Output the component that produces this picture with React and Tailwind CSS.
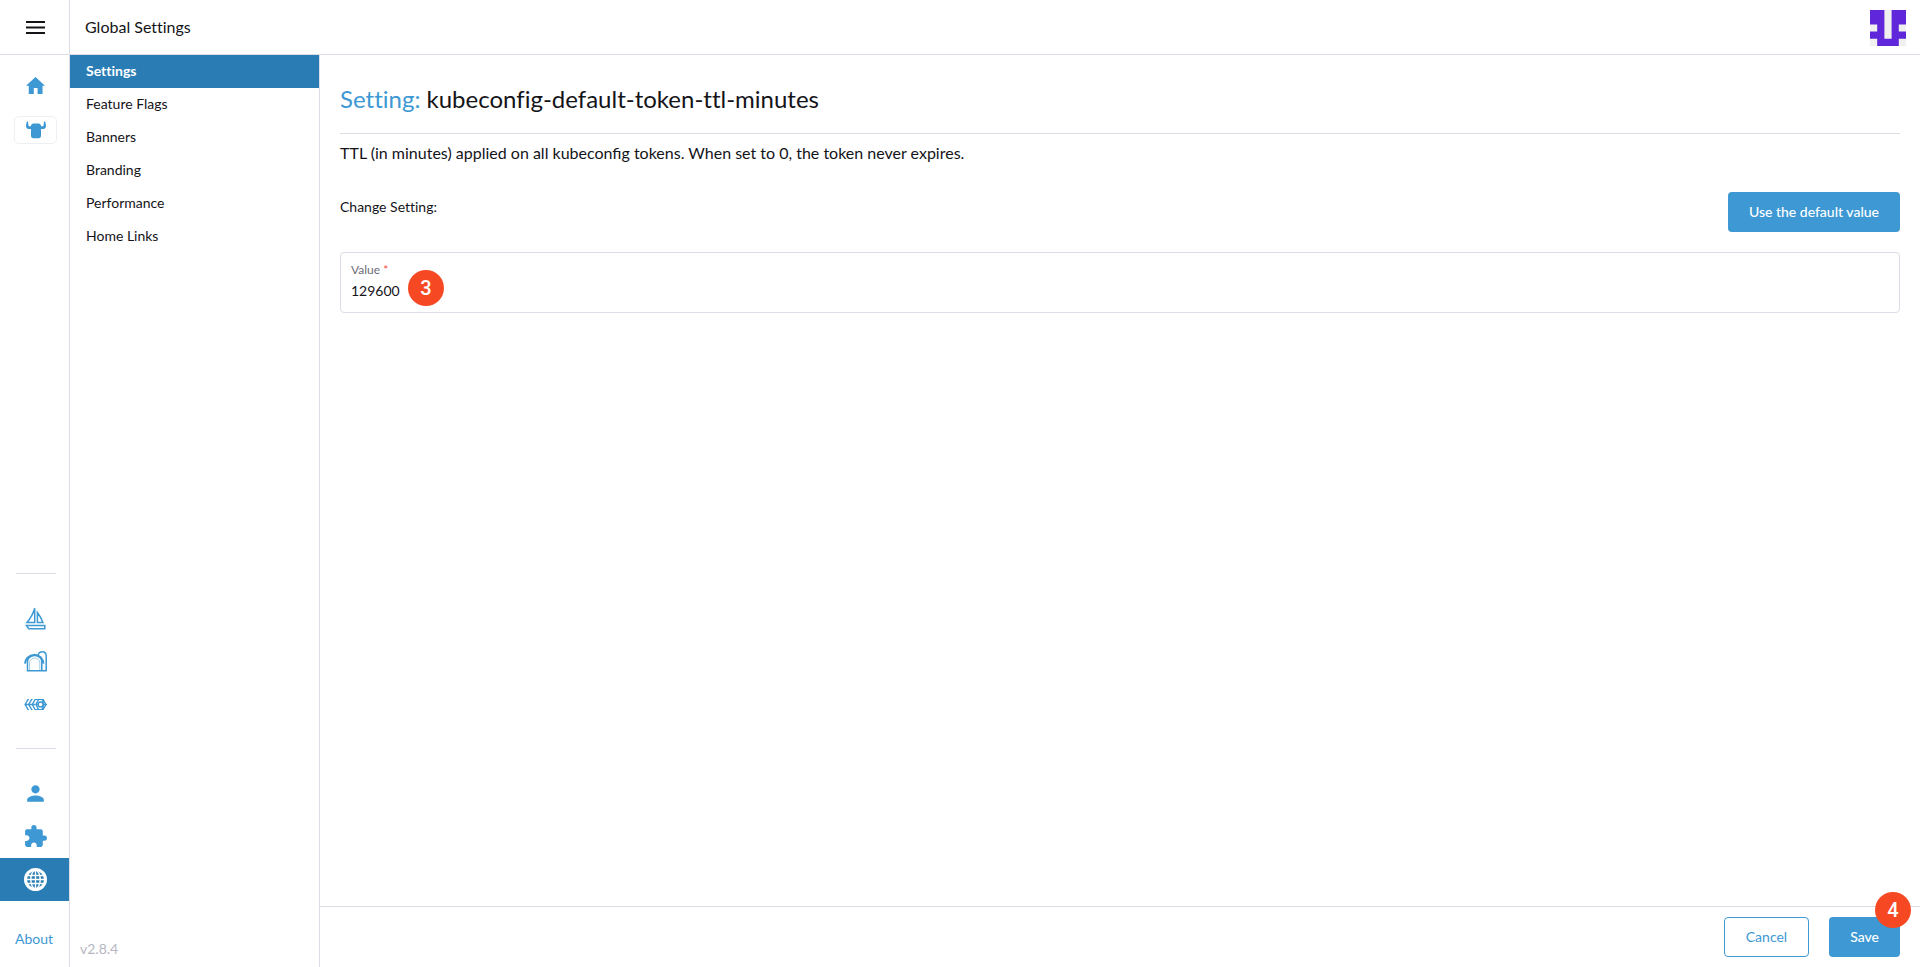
import React from "react";
import { MdPerson, MdExtension } from "react-icons/md";

const MenuIcon = () => (
  <svg viewBox="0 0 19 13" className="h-[13px] w-[19px]" fill="#141419" aria-hidden="true">
    <path d="M0 0h19v2H0zM0 5.500h19v2H0zM0 11h19v2H0z" />
  </svg>
);

const HomeIcon = () => (
  <svg viewBox="0 0 20 18" className="h-[17px] w-[19px]" preserveAspectRatio="none" fill="currentColor" aria-hidden="true">
    <path d="M10 0 20 9.200h-2.600V18h-5.200v-6.300H8.200V18H2.900V9.200H0z" />
  </svg>
);

const CowIcon = () => (
  <svg viewBox="0 0 20 18" className="h-[18px] w-5" fill="currentColor" aria-hidden="true">
    <path d="M5 5.200C5 3.500 6 2.600 7.500 2.600h5C14 2.600 15 3.500 15 5.200h1.400c.8 0 1.100-.4 1.200-1.200L18 .8c.1-.7 1-.7 1.200 0 .4 1.200.8 2.800.8 4.200 0 1.900-1 2.900-2.800 2.900H15v6.900c0 1.500-.9 2.400-2.400 2.400H7.400C5.900 17.200 5 16.300 5 14.800V7.900H2.800C1 7.900 0 6.900 0 5 0 3.600.4 2 .8.8 1 .1 1.900.1 2 .8L2.400 4c.1.8.4 1.200 1.200 1.200z" />
  </svg>
);

const BoatIcon = () => (
  <svg viewBox="-.5 0 21 25" className="h-[25px] w-[21px]" fill="none" stroke="currentColor" strokeWidth="1.500" aria-hidden="true">
    <path d="M9.200 2.300v14.200H1.500C5 12.500 7.500 8 9.200 2.300zM11.900 6.500v10h5.500c-1.400-3.700-3.200-7-5.500-10zM.9 19.500h18.400v3.200H3.200z" />
  </svg>
);

const BarnIcon = () => (
  <svg viewBox="0 0 23 21" className="h-[21px] w-[23px]" fill="none" stroke="currentColor" strokeWidth="1.500" aria-hidden="true">
    <path d="M3.500 10.500v9.300h14.300v-9.300c0-3.300-3-5.500-7.200-6.200-4.200.7-7.100 2.900-7.100 6.200zM17.800 19.800h4.400V5.100c0-2.700-1.700-4.300-3.900-4.300-2.300 0-3.800 1.300-4.100 3.200" />
    <path d="M1 12.700C1.600 7.200 5.100 4.400 10.700 3.700c5.300.7 8.100 3.500 8.800 9" strokeWidth="2" />
    <path d="M5.600 19.500V11C6 8.700 8 7.300 10.700 6.900c2.900.4 4.700 1.800 5.100 4.100v8.500" strokeWidth=".5" />
  </svg>
);

const ChainIcon = () => (
  <svg viewBox="0 .5 24 11" className="h-[11px] w-[23px]" fill="none" stroke="currentColor" strokeWidth="1.400" aria-hidden="true">
    <path d="M.5 6h11M4.300.7 1.200 6l3.100 5.300M8 .7 4.900 6 8 11.300M11.700.7 8.600 6l3.100 5.300M3.500.7h1.700M7.200.7h1.700M10.900.7h9L22.900 6l-3 5.300h-9M3.500 11.300h1.700M7.200 11.300h1.700M15.300.7 12.400 6l2.900 5.300M18.900.7 20.500 6l-1.600 5.300M12.400 6h2.200M20 6h4" />
    <circle cx="17.300" cy="6" r="2.600" />
  </svg>
);

const GlobeIcon = () => (
  <svg viewBox="0 0 23 23" className="size-[23px]" fill="none" stroke="currentColor" aria-hidden="true">
    <circle cx="11.500" cy="11.500" r="10" strokeWidth="3" />
    <ellipse cx="11.500" cy="11.500" rx="4.700" ry="9.300" strokeWidth="1.400" />
    <path d="M11.500 2v19M2 11.500h19M3 7.500h17M3 15.500h17" strokeWidth="1.300" />
  </svg>
);

const Avatar = () => (
  <svg viewBox="0 0 50 50" className="size-9" role="img" aria-label="User avatar">
    <path fill="#f0f0f0" d="M0 0h50v50H0z" />
    <path fill="#5f27d9" d="M0 0h20v40h10V0h20v20H40v10h10v10H40v10H10V40H0V30h10V20H0z" />
  </svg>
);

const RailLink = ({ label, active, children }) => (
  <a
    href="#"
    aria-label={label}
    className={
      active
        ? "flex h-[43px] w-full items-center justify-center bg-[#2a7cb4] pl-[2px] text-white"
        : "flex h-[43px] w-full items-center justify-center pl-[2px] text-[#3d98d3]"
    }
  >
    {children}
  </a>
);

const Divider = () => <hr className="mt-[22px] mb-[23px] ml-4 w-10 border-[#dcdee7]" />;

const Marker = ({ className, children }) => (
  <span
    className={`pointer-events-none absolute flex size-9 items-center justify-center rounded-full bg-[#f64923] font-[Roboto,sans-serif] text-xl font-medium text-white ${className}`}
  >
    {children}
  </span>
);

const navItems = ["Settings", "Feature Flags", "Banners", "Branding", "Performance", "Home Links"];

export default function App() {
  return (
    <div className="flex min-h-screen bg-white font-[Lato,sans-serif] text-sm text-[#141419]">
      <aside className="flex w-[70px] shrink-0 flex-col border-r border-[#dcdee7]">
        <button type="button" aria-label="Menu" className="flex h-[55px] items-center justify-center border-b border-[#dcdee7] pt-px pl-[2px]">
          <MenuIcon />
        </button>
        <nav aria-label="Main" className="flex flex-1 flex-col gap-px pt-[9px]">
          <RailLink label="Home">
            <HomeIcon />
          </RailLink>
          <RailLink label="Local cluster">
            <span className="flex h-7 w-[43px] items-center justify-center rounded-[5px] border border-[#eeeff4]">
              <CowIcon />
            </span>
          </RailLink>
          <div className="mt-auto">
            <Divider />
            <RailLink label="Continuous Delivery">
              <BoatIcon />
            </RailLink>
            <RailLink label="Virtualization Management">
              <BarnIcon />
            </RailLink>
            <RailLink label="Cluster Management">
              <ChainIcon />
            </RailLink>
            <Divider />
            <RailLink label="Users">
              <MdPerson className="size-[25px]" />
            </RailLink>
            <RailLink label="Extensions">
              <MdExtension className="size-[25px]" />
            </RailLink>
            <RailLink label="Global Settings" active>
              <GlobeIcon />
            </RailLink>
            <a href="#" className="flex h-[66px] items-center justify-center pt-[10px] pr-px text-[#3d98d3]">
              About
            </a>
          </div>
        </nav>
      </aside>

      <div className="flex min-w-0 flex-1 flex-col">
        <header className="flex h-[55px] items-center justify-between border-b border-[#dcdee7] pt-[2px] pr-[14px] pl-[15px]">
          <span className="pb-[2px] text-base/5 [font-variant-ligatures:no-common-ligatures]">Global Settings</span>
          <Avatar />
        </header>

        <div className="flex flex-1">
          <nav aria-label="Settings" className="flex w-[250px] shrink-0 flex-col border-r border-[#dcdee7]">
            <ul className="[font-variant-ligatures:no-common-ligatures]">
              {navItems.map((item, i) => (
                <li key={item}>
                  <a
                    href="#"
                    className={
                      i === 0
                        ? "flex h-[33px] items-center bg-[#2a7cb4] px-4 pb-[2px] font-bold text-white"
                        : "flex h-[33px] items-center px-4 pb-[2px]"
                    }
                  >
                    {item}
                  </a>
                </li>
              ))}
            </ul>
            <span className="mt-auto px-[10px] pb-2 text-[#b6b6c2]">v2.8.4</span>
          </nav>

          <div className="flex min-w-0 flex-1 flex-col">
            <main className="flex-1 px-5 pt-7">
              <h1 className="border-b border-[#dcdee7] pb-[18px] text-2xl [font-variant-ligatures:no-common-ligatures]">
                <a href="#" className="text-[#3d98d3]">Setting:</a> kubeconfig-default-token-ttl-minutes
              </h1>
              <p className="mt-[7px] text-base">
                TTL (in minutes) applied on all kubeconfig tokens. When set to 0, the token never expires.
              </p>
              <div className="mt-[27px] flex items-start justify-between">
                <h2 className="pt-[5px] [font-variant-ligatures:no-common-ligatures]">Change Setting:</h2>
                <button type="button" className="h-10 rounded-[4px] bg-[#3d98d3] px-[21px] font-medium text-white">
                  Use the default value
                </button>
              </div>
              <div className="relative mt-5 flex h-[61px] flex-col rounded-[4px] border border-[#dcdee7] px-[10px] pt-[7px]">
                <label htmlFor="value" className="text-xs/5 text-[#6c6c76]">
                  Value <span className="text-[#f64747]">*</span>
                </label>
                <input id="value" type="text" defaultValue="129600" className="mt-px h-5 w-full bg-transparent text-sm outline-none" />
                <Marker className="top-[17px] left-[67px]">3</Marker>
              </div>
            </main>

            <footer className="flex justify-end gap-5 border-t border-[#dcdee7] px-5 py-[10px]">
              <button type="button" className="h-10 rounded-[4px] border border-[#3d98d3] px-[21px] text-[#3d98d3]">
                Cancel
              </button>
              <div className="relative">
                <button type="button" className="h-10 rounded-[4px] bg-[#3d98d3] px-[21px] font-medium text-white">
                  Save
                </button>
                <Marker className="-top-[25px] -right-[11px]">4</Marker>
              </div>
            </footer>
          </div>
        </div>
      </div>
    </div>
  );
}
